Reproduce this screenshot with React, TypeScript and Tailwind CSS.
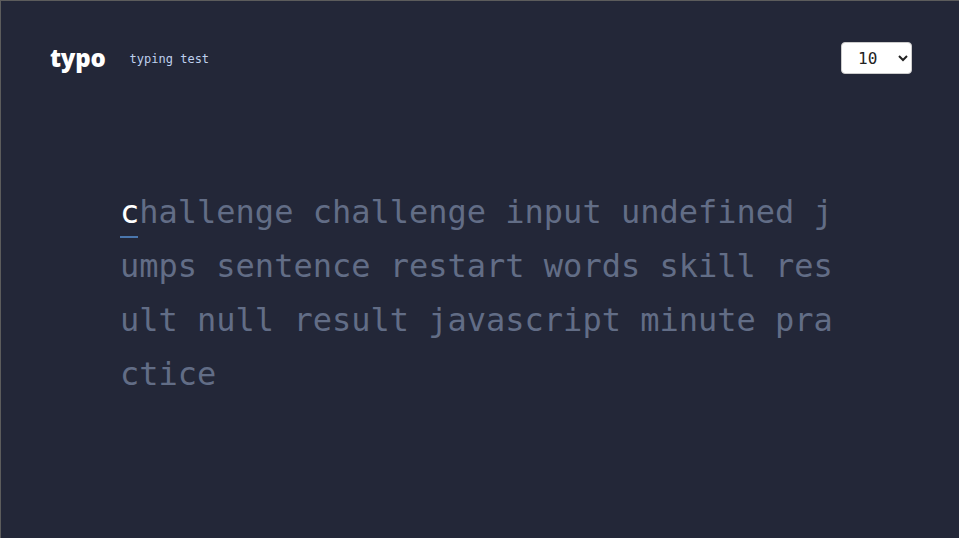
import { useState } from 'react';

const words = ['challenge', 'challenge', 'input', 'undefined', 'jumps', 'sentence', 'restart', 'words', 'skill', 'result', 'null', 'result', 'javascript', 'minute', 'practice'];

export default function App() {
  const [count, setCount] = useState('10');
  const text = words.join(' ');
  const rest = text.slice(1);

  return (
    <div className="min-h-screen w-full bg-[#232738] border-l border-t border-[#5c5c5c] font-['DejaVu_Sans_Mono',monospace]">
      <header className="flex items-center justify-between pl-[49px] pr-[47px] pt-[41px]">
        <div className="flex items-center gap-[24px]">
          <span className="font-['Open_Sans',sans-serif] font-extrabold text-[24px] text-white tracking-[-0.2px] leading-8">typo</span>
          <span className="text-[12px] text-[#bfd0ee] pt-[1px]">typing test</span>
        </div>
        <select
          value={count}
          onChange={(e) => setCount(e.target.value)}
          className="w-[71px] h-[32px] rounded bg-white text-[#222] text-[16px] pl-[12px] border border-[#ccc] font-['DejaVu_Sans_Mono',monospace]"
        >
          <option value="10">10</option>
          <option value="25">25</option>
          <option value="50">50</option>
          <option value="100">100</option>
        </select>
      </header>

      <main className="flex justify-center pt-[111px]">
        <p className="w-[720px] text-[32px] leading-[54px] text-[#626d86] break-all">
          <span className="relative text-white">
            c
            <span className="absolute left-0 bottom-[-7px] h-[2px] w-[18px] bg-[#4a76ad]" />
          </span>
          {rest}
        </p>
      </main>
    </div>
  );
}
